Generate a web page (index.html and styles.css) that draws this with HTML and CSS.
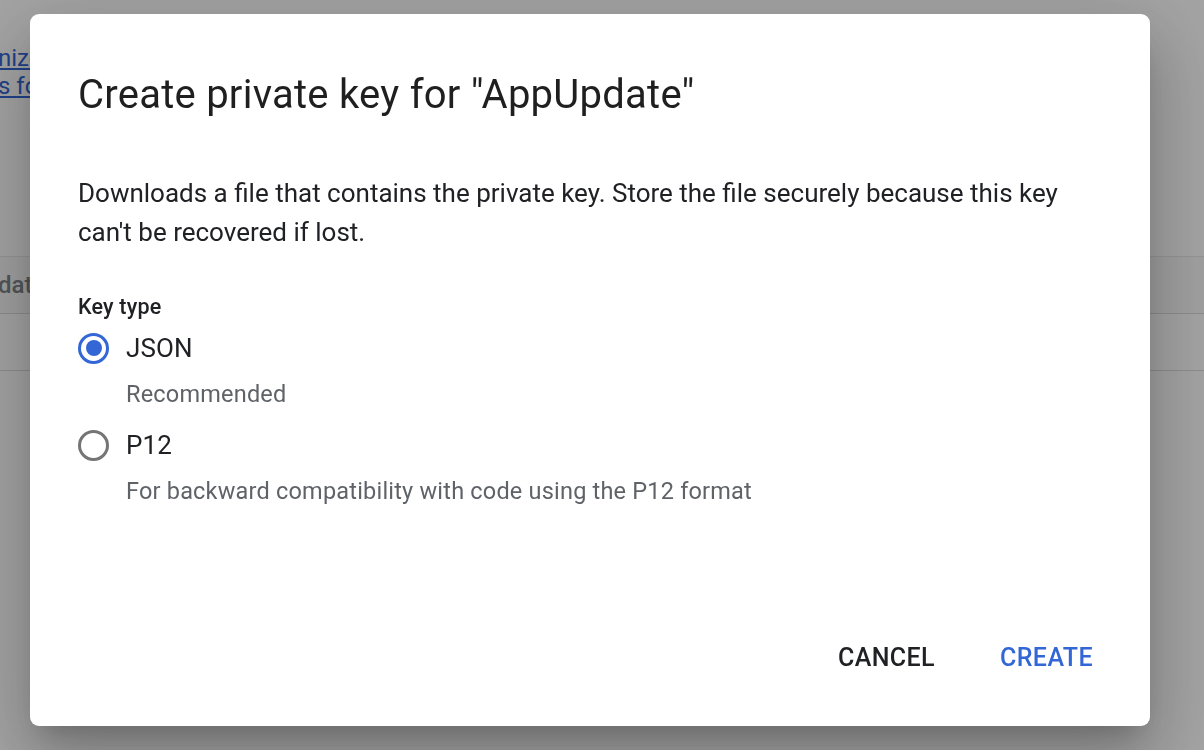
FILE: index.html
```html
<!DOCTYPE html>
<html lang="en">
  <head>
    <meta charset="UTF-8" />
    <meta name="viewport" content="width=device-width, initial-scale=1.0" />
    <title>Create private key</title>
    <link rel="stylesheet" href="styles.css">
  </head>
  <body>
    <div class="page">
      <div class="intro">
        <a href="#">nize</a><br />
        <a href="#">s for</a>
      </div>
      <div class="table">
        <div class="table-head">date</div>
        <div class="table-row"></div>
      </div>
    </div>

    <div class="scrim"></div>

    <div class="dialog">
      <h1>Create private key for "AppUpdate"</h1>
      <p class="desc">
        Downloads a file that contains the private key. Store the file securely
        because this key can't be recovered if lost.
      </p>
      <div class="field-label">Key type</div>
      <div class="options">
        <label class="option">
          <span class="option-row">
            <span class="radio checked"></span>
            <span class="option-name">JSON</span>
          </span>
          <span class="option-hint">Recommended</span>
        </label>
        <label class="option">
          <span class="option-row">
            <span class="radio"></span>
            <span class="option-name">P12</span>
          </span>
          <span class="option-hint">For backward compatibility with code using the P12 format</span>
        </label>
      </div>
      <div class="actions">
        <button class="btn">Cancel</button>
        <button class="btn primary">Create</button>
      </div>
    </div>
  </body>
</html>
```

FILE: styles.css
```css
* {
  box-sizing: border-box;
  margin: 0;
  padding: 0;
}

body {
  font-family: Roboto, "Liberation Sans", sans-serif;
  background: #ffffff;
  color: #202124;
  overflow: hidden;
}

/* page behind the dialog */
.page {
  padding-top: 44px;
  margin-left: -2px;
}

.intro {
  font-size: 24px;
  line-height: 28px;
}

.intro a {
  color: #3367d6;
}

.table {
  margin-top: 156px;
  border-top: 1px solid #e8e8e8;
}

.table-head {
  height: 57px;
  line-height: 57px;
  font-size: 24px;
  font-weight: 500;
  color: #80868b;
  background: #fafafa;
  border-bottom: 1px solid #dadce0;
  white-space: nowrap;
}

.table-row {
  height: 57px;
  border-bottom: 1px solid #dadce0;
}

.scrim {
  position: fixed;
  inset: 0;
  background: rgba(0, 0, 0, 0.36);
}

/* dialog */
.dialog {
  position: fixed;
  left: 30px;
  top: 14px;
  width: 1120px;
  height: 712px;
  background: #fff;
  border-radius: 9px;
  padding: 57px 48px 37px 48px;
  display: flex;
  flex-direction: column;
  box-shadow: 0 40px 64px 5px rgba(0, 0, 0, 0.14),
    0 15px 80px 14px rgba(0, 0, 0, 0.12),
    0 18px 26px -12px rgba(0, 0, 0, 0.2);
}

h1 {
  font-size: 40px;
  line-height: 48px;
  font-weight: 400;
  letter-spacing: 0.25px;
  color: #1f1f1f;
}

.desc {
  margin-top: 55px;
  font-size: 26px;
  line-height: 39px;
}

.field-label {
  margin-top: 41px;
  font-size: 21.5px;
  line-height: 28px;
  font-weight: 500;
  letter-spacing: 0.2px;
}

.options {
  margin-top: 7px;
  display: flex;
  flex-direction: column;
  gap: 15px;
}

.option {
  display: flex;
  flex-direction: column;
}

.option-row {
  display: flex;
  align-items: center;
  gap: 17px;
  height: 40px;
}

.option-name {
  font-size: 26px;
  letter-spacing: 0.1px;
}

.option-hint {
  margin-top: 10px;
  margin-left: 48px;
  font-size: 23.5px;
  line-height: 32px;
  letter-spacing: 0.2px;
  color: #5f6368;
}

.radio {
  width: 31px;
  height: 31px;
  border-radius: 50%;
  border: 3.5px solid #757575;
  display: flex;
  align-items: center;
  justify-content: center;
}

.radio.checked {
  border-color: #3367d6;
}

.radio.checked::after {
  content: "";
  width: 16px;
  height: 16px;
  border-radius: 50%;
  background: #3367d6;
}

.actions {
  margin-top: auto;
  display: flex;
  justify-content: flex-end;
  gap: 33px;
  margin-right: -7px;
}

.btn {
  font-family: Roboto, "Liberation Sans", sans-serif;
  font-size: 25px;
  font-weight: 500;
  letter-spacing: 0.4px;
  text-transform: uppercase;
  height: 63px;
  padding: 0 16px;
  background: none;
  border: none;
  color: #202124;
  cursor: pointer;
}

.btn.primary {
  color: #3367d6;
}
```
